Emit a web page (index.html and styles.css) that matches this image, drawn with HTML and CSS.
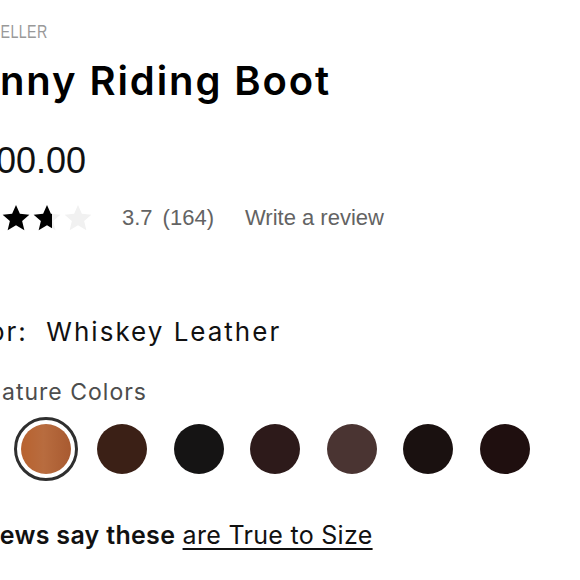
FILE: index.html
```html
<!DOCTYPE html>
<html lang="en">
<head>
<meta charset="utf-8">
<title>Skinny Riding Boot</title>
<link rel="stylesheet" href="styles.css">
</head>
<body>
<div class="page">
  <div class="info">
    <div class="badge">BESTSELLER</div>
    <h1 class="title">Skinny Riding Boot</h1>
    <div class="price">$200.00</div>
    <div class="rating">
      <div class="stars">
        <svg class="star" viewBox="0 0 24 24"><path class="on" d="M12 1.6l3.1 7 7.6.7-5.8 5 1.8 7.5L12 17.8l-6.7 4 1.8-7.5-5.8-5 7.6-.7z"/></svg>
        <svg class="star" viewBox="0 0 24 24"><path class="on" d="M12 1.6l3.1 7 7.6.7-5.8 5 1.8 7.5L12 17.8l-6.7 4 1.8-7.5-5.8-5 7.6-.7z"/></svg>
        <svg class="star" viewBox="0 0 24 24"><path class="on" d="M12 1.6l3.1 7 7.6.7-5.8 5 1.8 7.5L12 17.8l-6.7 4 1.8-7.5-5.8-5 7.6-.7z"/></svg>
        <svg class="star" viewBox="0 0 24 24"><defs><linearGradient id="part" x1="0" x2="1" y1="0" y2="0"><stop offset="0.68" stop-color="#000"/><stop offset="0.68" stop-color="#f1f1f1"/></linearGradient></defs><path fill="url(#part)" d="M12 1.6l3.1 7 7.6.7-5.8 5 1.8 7.5L12 17.8l-6.7 4 1.8-7.5-5.8-5 7.6-.7z"/></svg>
        <svg class="star" viewBox="0 0 24 24"><path class="off" d="M12 1.6l3.1 7 7.6.7-5.8 5 1.8 7.5L12 17.8l-6.7 4 1.8-7.5-5.8-5 7.6-.7z"/></svg>
      </div>
      <span class="score">3.7</span>
      <span class="count">(164)</span>
      <a class="write" href="#">Write a review</a>
    </div>
    <div class="color-label">Color:&nbsp; Whiskey Leather</div>
    <div class="group-label">Signature Colors</div>
  </div>
  <div class="swatches">
    <span class="swatch selected"><span class="chip c1"></span></span>
    <span class="swatch"><span class="chip c2"></span></span>
    <span class="swatch"><span class="chip c3"></span></span>
    <span class="swatch"><span class="chip c4"></span></span>
    <span class="swatch"><span class="chip c5"></span></span>
    <span class="swatch"><span class="chip c6"></span></span>
    <span class="swatch"><span class="chip c7"></span></span>
  </div>
  <div class="info">
    <p class="fit"><strong>Reviews say these</strong> <a href="#">are True to Size</a></p>
  </div>
</div>
</body>
</html>
```

FILE: styles.css
```css
html, body {
  margin: 0;
  padding: 0;
  background: #fff;
  overflow: hidden;
}
body {
  width: 580px;
  height: 580px;
  font-family: Inter, Lato, "Liberation Sans", sans-serif;
  color: #111;
}
.page {
  padding-top: 22px;
}
.info {
  margin-left: -50px;
}
.badge {
  font-family: "Liberation Sans", sans-serif;
  font-size: 19px;
  line-height: 19px;
  color: #999;
  letter-spacing: 0.5px;
  margin-left: 2px;
  transform: scaleX(0.75);
  transform-origin: 0 50%;
}
.title {
  margin: 16px 0 0 -15px;
  font-size: 40px;
  line-height: 48px;
  font-weight: 600;
  letter-spacing: 1.9px;
  color: #000;
}
.price {
  margin-top: 34px;
  margin-left: 6px;
  font-family: "Liberation Sans", sans-serif;
  font-size: 36px;
  line-height: 43px;
  color: #111;
}
.rating {
  margin-top: 21px;
  margin-left: -11px;
  display: flex;
  align-items: center;
  font-family: "Liberation Sans", sans-serif;
  font-size: 22px;
  line-height: 30px;
  color: #636363;
}
.stars {
  display: flex;
  gap: 1px;
  margin-right: 29px;
}
.star {
  width: 30px;
  height: 30px;
  display: block;
}
.star .on { fill: #000; }
.star .off { fill: #f1f1f1; }
.count { margin-left: 10px; }
.write {
  margin-left: 31px;
  color: #636363;
  text-decoration: none;
}
.color-label {
  margin: 83px 0 0 -8px;
  font-size: 26px;
  line-height: 32px;
  letter-spacing: 2px;
  color: #111;
}
.group-label {
  margin-top: 29px;
  font-size: 23px;
  line-height: 30px;
  letter-spacing: 1px;
  color: #4d4d4d;
}
.swatches {
  display: flex;
  gap: 12.5px;
  padding-left: 13.5px;
  margin-top: 9.5px;
}
.swatch {
  box-sizing: border-box;
  width: 64px;
  height: 64px;
  padding: 4px;
  border: 3px solid transparent;
  border-radius: 50%;
  display: block;
}
.swatch.selected { border-color: #2f2f2f; }
.chip {
  display: block;
  width: 50px;
  height: 50px;
  border-radius: 50%;
}
.c1 { background: linear-gradient(90deg, #b8622f 0%, #b86c3f 45%, #a85a30 100%); }
.c2 { background: #3b2016; }
.c3 { background: #151414; }
.c4 { background: #2d1a1a; }
.c5 { background: #4a3432; }
.c6 { background: #1a1110; }
.c7 { background: #1f0f0f; }
.fit {
  margin: 39px 0 0 -3px;
  font-size: 25px;
  line-height: 30px;
  letter-spacing: 0.3px;
  color: #111;
}
.fit strong { font-weight: 600; }
.fit a {
  color: #111;
  text-decoration: underline;
  text-underline-offset: 4px;
  text-decoration-thickness: 1.5px;
}
```
